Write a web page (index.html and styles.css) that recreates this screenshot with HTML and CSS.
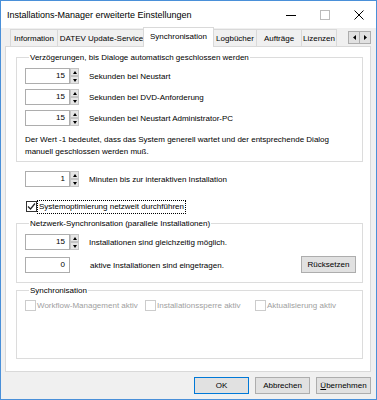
FILE: index.html
```html
<!DOCTYPE html>
<html lang="de">
<head>
<meta charset="utf-8">
<link rel="stylesheet" href="styles.css">
</head>
<body>
<div class="window">
  <div class="titlebar">
    <span class="title">Installations-Manager erweiterte Einstellungen</span>
    <div class="controls">
      <span class="ctl"><svg width="10" height="10" viewBox="0 0 10 10"><path d="M0 5.5h10" stroke="#000" stroke-width="1"/></svg></span>
      <span class="ctl"><svg width="10" height="10" viewBox="0 0 10 10"><rect x="0.5" y="0.5" width="9" height="9" fill="none" stroke="#bbb"/></svg></span>
      <span class="ctl"><svg width="10" height="10" viewBox="0 0 10 10"><path d="M0.5 0.5l9 9M9.5 0.5l-9 9" stroke="#000" stroke-width="1"/></svg></span>
    </div>
  </div>
  <div class="client">
    <div class="tabs">
      <span class="tab t1">Information</span>
      <span class="tab t2">DATEV Update-Service</span>
      <span class="tab sel">Synchronisation</span>
      <span class="tab t4">Logbücher</span>
      <span class="tab t5">Aufträge</span>
      <span class="tab t6">Lizenzen</span>
      <span class="scroll">
        <span class="sbtn"><svg width="3" height="5" viewBox="0 0 3 5"><path d="M3 0v5L0 2.5z" fill="#000"/></svg></span>
        <span class="sbtn"><svg width="3" height="5" viewBox="0 0 3 5"><path d="M0 0v5l3-2.5z" fill="#000"/></svg></span>
      </span>
    </div>
    <div class="panel">
      <fieldset class="group g1">
        <legend>Verzögerungen, bis Dialoge automatisch geschlossen werden</legend>
        <div class="row">
          <span class="spin"><span class="box">15</span><span class="arrows"><span class="arr up"></span><span class="arr down"></span></span></span>
          <span class="lbl">Sekunden bei Neustart</span>
        </div>
        <div class="row">
          <span class="spin"><span class="box">15</span><span class="arrows"><span class="arr up"></span><span class="arr down"></span></span></span>
          <span class="lbl">Sekunden bei DVD-Anforderung</span>
        </div>
        <div class="row">
          <span class="spin"><span class="box">15</span><span class="arrows"><span class="arr up"></span><span class="arr down"></span></span></span>
          <span class="lbl">Sekunden bei Neustart Administrator-PC</span>
        </div>
        <p class="note">Der Wert -1 bedeutet, dass das System generell wartet und der entsprechende Dialog<br>manuell geschlossen werden muß.</p>
      </fieldset>
      <div class="row minute">
        <span class="spin"><span class="box">1</span><span class="arrows"><span class="arr up"></span><span class="arr down"></span></span></span>
        <span class="lbl">Minuten bis zur interaktiven Installation</span>
      </div>
      <div class="check-row opt">
        <span class="cb checked"><svg width="9" height="9" viewBox="0 0 9 9"><path d="M1 4.5l2.5 2.5L8 1.5" fill="none" stroke="#222" stroke-width="1.2"/></svg></span>
        <span class="focus">Systemoptimierung netzweit durchführen</span>
      </div>
      <fieldset class="group g2">
        <legend>Netzwerk-Synchronisation (parallele Installationen)</legend>
        <div class="row">
          <span class="spin"><span class="box">15</span><span class="arrows"><span class="arr up"></span><span class="arr down"></span></span></span>
          <span class="lbl">Installationen sind gleichzeitig möglich.</span>
        </div>
        <div class="row r2">
          <span class="box solo">0</span>
          <span class="lbl">aktive Installationen sind eingetragen.</span>
          <span class="btn reset">Rücksetzen</span>
        </div>
      </fieldset>
      <fieldset class="group g3">
        <legend>Synchronisation</legend>
        <div class="checks">
          <span class="check-row dis c1"><span class="cb"></span><span>Workflow-Management aktiv</span></span>
          <span class="check-row dis c2"><span class="cb"></span><span>Installationssperre aktiv</span></span>
          <span class="check-row dis c3"><span class="cb"></span><span>Aktualisierung aktiv</span></span>
        </div>
      </fieldset>
    </div>
    <div class="buttons">
      <span class="btn def">OK</span>
      <span class="btn">Abbrechen</span>
      <span class="btn"><u>Ü</u>bernehmen</span>
    </div>
  </div>
</div>
</body>
</html>
```
FILE: styles.css
```css
* { box-sizing: border-box; }
html, body { margin: 0; padding: 0; }
body {
  font-family: "Liberation Sans", Arial, sans-serif;
  font-size: 8px;
  color: #000;
  background: #fff;
  white-space: nowrap;
}
.window {
  width: 377px;
  height: 400px;
  border: 1px solid #4a90d9;
  display: flex;
  flex-direction: column;
  background: #f0f0f0;
}
.titlebar {
  height: 27px;
  background: #fff;
  display: flex;
  align-items: center;
  padding-left: 6px;
  flex: none;
}
.title {
  font-size: 9px;
  flex: 1;
}
.controls { display: flex; }
.ctl {
  width: 34px;
  height: 27px;
  display: flex;
  align-items: center;
  justify-content: center;
}
.client {
  flex: 1;
  display: flex;
  flex-direction: column;
  padding: 0 5px 0 4px;
}
.tabs {
  height: 18px;
  display: flex;
  align-items: flex-end;
  position: relative;
  z-index: 1;
  padding-left: 5px;
}
.tab {
  height: 17px;
  border: 1px solid #d9d9d9;
  border-bottom: none;
  background: #f0f0f0;
  display: flex;
  align-items: center;
  justify-content: center;
  margin-right: -1px;
}
.t1 { width: 48px; }
.t2 { width: 89px; }
.tab.sel {
  width: 71px;
  background: #fff;
  margin: 0 -2px -1px -2px;
  position: relative;
  z-index: 2;
  height: 20px;
  padding-bottom: 2px;
}
.t4 { width: 45px; padding-left: 1px; }
.t5 { width: 46px; }
.t6 { width: 36px; }
.scroll {
  margin-left: auto;
  display: flex;
  margin-bottom: 2px;
}
.sbtn {
  width: 12px;
  height: 13px;
  border: 1px solid #adadad;
  background: #e1e1e1;
  display: flex;
  align-items: center;
  justify-content: center;
  margin-left: -1px;
}
.panel {
  height: 326px;
  background: #fff;
  border: 1px solid #d9d9d9;
  display: flex;
  flex-direction: column;
  padding: 4px 7px 12px 10px;
}
.group {
  margin: 0;
  border: 1px solid #dcdcdc;
  padding: 4px 8px 3px 8px;
  min-width: 0;
}
.group legend {
  padding: 0 1px;
  margin-left: 4px;
  line-height: 13px;
}
.row {
  display: flex;
  align-items: center;
  height: 16px;
}
.row + .row { margin-top: 5px; }
.spin { display: flex; height: 16px; }
.box {
  width: 45px;
  height: 16px;
  border: 1px solid #adadad;
  text-align: right;
  padding-right: 4px;
  line-height: 14px;
  background: #fff;
}
.arrows {
  display: flex;
  flex-direction: column;
  width: 9px;
}
.arr {
  height: 8px;
  background: #e6e6e6;
  border: 1px solid #c4c4c4;
  position: relative;
}
.arr::after {
  content: "";
  position: absolute;
  left: 1.5px;
  border-left: 2.5px solid transparent;
  border-right: 2.5px solid transparent;
}
.arr.up::after { top: 1.5px; border-bottom: 3px solid #000; }
.arr.down::after { top: 1.5px; border-top: 3px solid #000; }
.lbl { margin-left: 10px; }
.note {
  margin: 8px 0 0 0;
  line-height: 12px;
}
.minute {
  margin: 9px 0 0 9px;
}
.check-row {
  display: flex;
  align-items: center;
}
.opt {
  margin: 13px 0 0 10px;
  height: 13px;
}
.cb {
  width: 11px;
  height: 11px;
  border: 1px solid #333;
  background: #fff;
  display: flex;
  align-items: center;
  justify-content: center;
  margin-right: 1px;
  flex: none;
}
.focus {
  outline: 1px dotted #000;
  padding: 0 1px;
  line-height: 12px;
}
.g2 { margin-top: 4px; padding-bottom: 9px; }
.r2 { margin-top: 7px !important; }
.btn {
  height: 17px;
  width: 55px;
  border: 1px solid #adadad;
  background: #e1e1e1;
  display: flex;
  align-items: center;
  justify-content: center;
}
.reset { margin-left: auto; margin-right: -2px; margin-top: -2px; }
.g2 .lbl { margin-left: 20px; }
.g2 .spin + .lbl { margin-left: 10px; }
.g3 { margin-top: 1px; flex: 1; padding-top: 3px; }
.checks { display: flex; }
.dis { color: #a0a0a0; }
.dis .cb { border-color: #cccccc; }
.c1 { width: 120px; }
.c2 { width: 110px; }
.buttons {
  display: flex;
  justify-content: flex-end;
  gap: 6px;
  margin-top: 5px;
}
.btn.def { border-color: #0078d7; }
```
